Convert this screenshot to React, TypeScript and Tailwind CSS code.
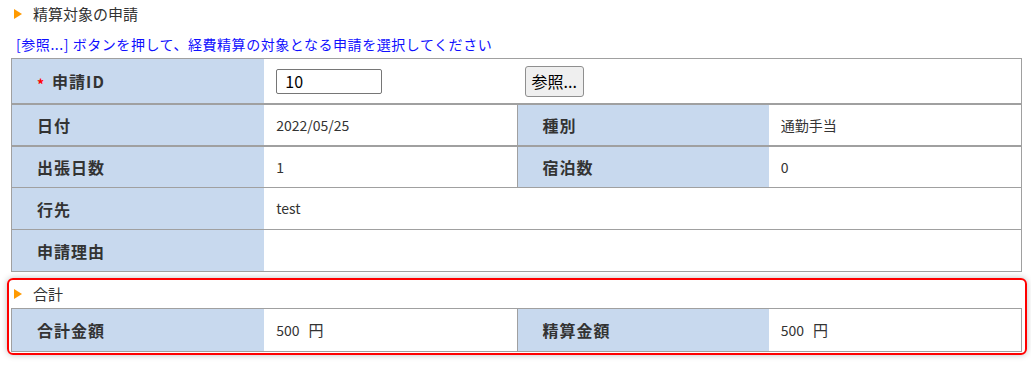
import React from 'react'

const font = { fontFamily: '"Noto Sans CJK JP", "Noto Sans", sans-serif' }

const labelClass = 'flex items-center bg-[#c8d9ee] pl-[25px] text-[16px] tracking-[1px] font-bold text-[#333]'
const valueClass = 'flex items-center bg-white pl-[12px] text-[14px] text-[#333]'

function SectionTitle({ children, indent }: { children: React.ReactNode; indent: string }) {
  return (
    <div className="flex items-center h-[28px]">
      <span className={indent + ' w-0 h-0 border-y-[5px] border-y-transparent border-l-[8px] border-l-[#ff9a00]'} />
      <span className="ml-[11px] text-[15px] text-[#333]">{children}</span>
    </div>
  )
}

function Row4({ items, thick }: { items: [string, string, string, string]; thick?: boolean }) {
  return (
    <div className={'grid grid-cols-4 h-[42px] ' + (thick ? 'border-t-2 border-[#a0a0a0]' : 'border-t border-[#a0a0a0]')}>
      <div className={labelClass}>{items[0]}</div>
      <div className={valueClass}>{items[1]}</div>
      <div className={labelClass + ' border-l border-[#a0a0a0]'}>{items[2]}</div>
      <div className={valueClass}>{items[3]}</div>
    </div>
  )
}

function Row2({ label, value }: { label: string; value: string }) {
  return (
    <div className="grid grid-cols-4 h-[42px] border-t border-[#a0a0a0]">
      <div className={labelClass}>{label}</div>
      <div className={valueClass + ' col-span-3'}>{value}</div>
    </div>
  )
}

function Yen({ amount }: { amount: string }) {
  return (
    <>
      {amount}
      <span className="ml-[9px] text-[15px]">円</span>
    </>
  )
}

export default function App() {
  return (
    <div className="w-[1031px] h-[368px] bg-white" style={font}>
      <SectionTitle indent="ml-[14px]">精算対象の申請</SectionTitle>
      <div className="mt-[6px] pl-[16px] text-[14px] tracking-[0.55px] text-[#1010ff] leading-[20px]">
        [参照...] ボタンを押して、経費精算の対象となる申請を選択してください
      </div>

      <div className="mt-[4px] ml-[11px] w-[1011px] border border-[#a0a0a0]">
        <div className="grid grid-cols-4 h-[44px]">
          <div className={labelClass + ' pl-[12px]'}>
            <span className="text-[#ff0000] text-[14px] mr-[7px] mt-[6px]">*</span>
            申請ID
          </div>
          <div className="flex items-center bg-white pl-[12px]">
            <input
              defaultValue="10"
              className="w-[106px] h-[25px] border border-[#767676] rounded-[2px] px-[8px] text-[16px] text-black outline-none"
            />
          </div>
          <div className="flex items-center bg-white pl-[8px] col-span-2">
            <button className="h-[31px] px-[6px] bg-[#efefef] border border-[#8f8f8f] rounded-[3px] text-[16px] text-black">
              参照...
            </button>
          </div>
        </div>
        <Row4 thick items={['日付', '2022/05/25', '種別', '通勤手当']} />
        <Row4 thick items={['出張日数', '1', '宿泊数', '0']} />
        <Row2 label="行先" value="test" />
        <Row2 label="申請理由" value="" />
      </div>

      <div className="mt-[6px] ml-[7px] w-[1020px] border-2 border-[#ff0000] rounded-[6px] shadow-[0_0_6px_rgba(0,0,0,0.25)] pl-[2px] pb-[1px]">
        <SectionTitle indent="ml-[3px]">合計</SectionTitle>
        <div className="w-[1011px] border border-[#a0a0a0]">
          <div className="grid grid-cols-4 h-[42px]">
            <div className={labelClass}>合計金額</div>
            <div className={valueClass}><Yen amount="500" /></div>
            <div className={labelClass + ' border-l border-[#a0a0a0]'}>精算金額</div>
            <div className={valueClass}><Yen amount="500" /></div>
          </div>
        </div>
      </div>
    </div>
  )
}
